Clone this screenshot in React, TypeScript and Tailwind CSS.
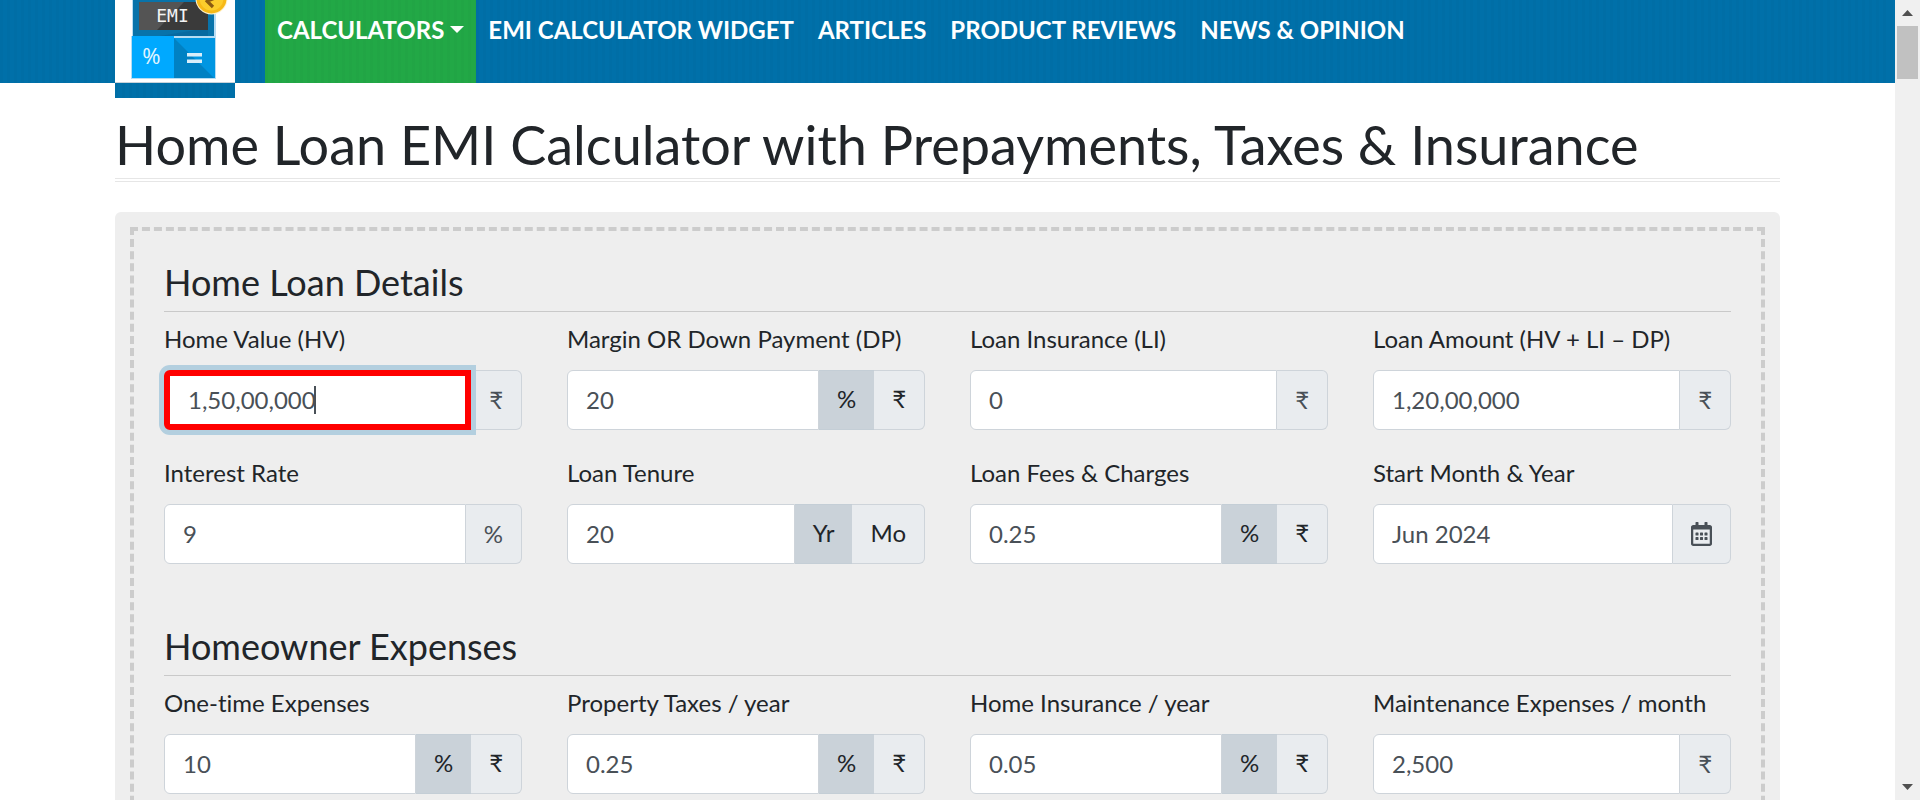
import { useId } from "react";
import { FaRegCalendarAlt } from "react-icons/fa";

type Unit = { text: string; active?: boolean };

type FieldData = {
  label: string;
  value: string;
  unit?: string;
  toggle?: Unit[];
  calendar?: boolean;
  focused?: boolean;
};

const percentOrRupee: Unit[] = [{ text: "%", active: true }, { text: "₹" }];

const loanFields: FieldData[] = [
  { label: "Home Value (HV)", value: "1,50,00,000", unit: "₹", focused: true },
  { label: "Margin OR Down Payment (DP)", value: "20", toggle: percentOrRupee },
  { label: "Loan Insurance (LI)", value: "0", unit: "₹" },
  { label: "Loan Amount (HV + LI – DP)", value: "1,20,00,000", unit: "₹" },
  { label: "Interest Rate", value: "9", unit: "%" },
  { label: "Loan Tenure", value: "20", toggle: [{ text: "Yr", active: true }, { text: "Mo" }] },
  { label: "Loan Fees & Charges", value: "0.25", toggle: percentOrRupee },
  { label: "Start Month & Year", value: "Jun 2024", calendar: true },
];

const expenseFields: FieldData[] = [
  { label: "One-time Expenses", value: "10", toggle: percentOrRupee },
  { label: "Property Taxes / year", value: "0.25", toggle: percentOrRupee },
  { label: "Home Insurance / year", value: "0.05", toggle: percentOrRupee },
  { label: "Maintenance Expenses / month", value: "2,500", unit: "₹" },
];

const navLinks = ["EMI CALCULATOR WIDGET", "ARTICLES", "PRODUCT REVIEWS", "NEWS & OPINION"];

const stripes =
  "bg-[repeating-linear-gradient(90deg,rgba(0,0,0,0.02)_0px,rgba(0,0,0,0.02)_3px,transparent_3px,transparent_7px)]";

function Logo() {
  return (
    <svg viewBox="0 0 120 83" className="block h-[83px] w-[120px]" role="img" aria-label="EMI Calculator">
      <rect width="120" height="83" fill="#fff" />
      <rect y="82" width="120" height="1" fill="#c9d3da" />
      <rect x="17" y="-4" width="84" height="42" fill="#b9dcf2" />
      <rect x="18" y="-4" width="81" height="42" fill="#0873aa" />
      <path d="M81 30 93 14V36H45Z" fill="#0769a0" />
      <rect x="24" y="2" width="69" height="28" fill="#545454" />
      <path d="M69 2H93V30H42Z" fill="#3a3a3a" />
      <text x="57.500" y="22" textAnchor="middle" fontSize="18" fontFamily="DejaVu Sans Mono, monospace" fill="#f3f3f3">
        EMI
      </text>
      <rect x="16" y="36" width="85" height="43" fill="#b5dcf3" />
      <rect x="17" y="36" width="42" height="42" fill="#00a9ff" />
      <rect x="59" y="38" width="41" height="40" fill="#0096e2" />
      <path d="M59 38 99 78H59Z" fill="#0081c3" />
      <text x="36.500" y="64" textAnchor="middle" fontSize="22" fontFamily="Noto Sans, sans-serif" fill="#dff3ff">
        %
      </text>
      <path d="M72 53H87V56.500H72ZM72 59.500H87V63H72Z" fill="#d9eefa" />
      <circle cx="96.500" cy="-1.500" r="16" fill="#fff3cf" />
      <circle cx="96.500" cy="-1.500" r="15" fill="#f7b916" />
      <circle cx="96.500" cy="-1.500" r="12" fill="#fccd2c" />
      <path d="M91 0.500C95 0.500 98 0 100 -3M91 0 98 7" fill="none" stroke="#8a5a12" strokeWidth="3.200" />
    </svg>
  );
}

function Header() {
  return (
    <header className={`h-[83px] bg-[#0070a9] px-[115px] ${stripes}`}>
      <div className="flex items-start">
        <a href="#home" className={`mr-[30px] block h-[98px] w-[120px] shrink-0 bg-[#0070a9] ${stripes}`}>
          <Logo />
        </a>
        <nav className="flex whitespace-nowrap text-2xl font-bold text-white">
          <button type="button" className={`flex h-[83px] items-start bg-[#22a846] px-3 pt-3 ${stripes}`}>
            <span className="leading-9">CALCULATORS</span>
            <svg viewBox="0 0 14 7" className="mt-[14px] ml-1.5 h-[7px] w-[14px]" aria-hidden="true">
              <path d="M0 0H14L7 7Z" fill="currentColor" />
            </svg>
          </button>
          {navLinks.map((text) => (
            <a key={text} href="#nav" className="px-3 pt-3 leading-9">
              {text}
            </a>
          ))}
        </nav>
      </div>
    </header>
  );
}

function Field({ label, value, unit, toggle, calendar, focused }: FieldData) {
  const id = useId();
  return (
    <div>
      <label htmlFor={id} className="mb-3.5 block whitespace-nowrap leading-[34px]">
        {label}
      </label>
      <div className="flex h-[60px]">
        <div className="relative flex min-w-0 flex-1">
          <input
            id={id}
            type="text"
            defaultValue={value}
            className={
              focused
                ? "z-10 w-full min-w-0 rounded-l-md border-[6px] border-[#ff0000] bg-white px-[18px] text-[#495057] shadow-[0_0_0_5px_#b3cfdf] outline-none"
                : "w-full min-w-0 rounded-l-md border border-[#ced4da] bg-white px-[18px] text-[#495057] outline-none"
            }
          />
          {focused && <span className="absolute top-4 left-[150px] z-20 h-7 w-0.5 bg-[#495057]" aria-hidden="true" />}
        </div>
        {unit && (
          <span className="flex items-center rounded-r-md border border-l-0 border-[#ced4da] bg-[#e9ecef] px-[18px] text-[#495057]">
            {unit}
          </span>
        )}
        {calendar && (
          <button
            type="button"
            aria-label="Choose month"
            className="flex items-center rounded-r-md border border-l-0 border-[#ced4da] bg-[#e9ecef] px-[18px] text-[#495057]"
          >
            <FaRegCalendarAlt className="h-6 w-[21px]" />
          </button>
        )}
        {toggle?.map(({ text, active }) => (
          <button
            key={text}
            type="button"
            aria-pressed={!!active}
            className={
              active
                ? "border-y border-[#c4ced6] bg-[#cad2d9] px-[18px] pb-0.5 text-[#212529]"
                : "rounded-r-md border border-l-0 border-[#ced4da] bg-[#e9ecef] px-[18px] pb-0.5 text-[#212529]"
            }
          >
            {text}
          </button>
        ))}
      </div>
    </div>
  );
}

function Section({ title, fields }: { title: string; fields: FieldData[] }) {
  return (
    <section>
      <h2 className="mb-2.5 border-b border-[#c9c9c9] pb-[7px] text-4xl leading-[43px]">{title}</h2>
      <div className="grid grid-cols-4 gap-x-[45px] gap-y-[26px]">
        {fields.map((field) => (
          <Field key={field.label} {...field} />
        ))}
      </div>
    </section>
  );
}

function ScrollBar() {
  return (
    <div className="flex w-[25px] shrink-0 flex-col items-center bg-[#f0f0f0]" aria-hidden="true">
      <svg viewBox="0 0 25 26" className="h-[26px] w-[25px]">
        <path d="M7 16 12.500 10 18 16Z" fill="#505050" />
      </svg>
      <div className="h-[53px] w-[21px] bg-[#c1c1c1]" />
      <svg viewBox="0 0 25 26" className="mt-auto h-[26px] w-[25px]">
        <path d="M7 10 12.500 16 18 10Z" fill="#505050" />
      </svg>
    </div>
  );
}

export default function App() {
  return (
    <div className="flex h-screen overflow-hidden bg-white font-['Lato',sans-serif] text-2xl text-[#212529] [font-variant-ligatures:no-common-ligatures]">
      <div className="min-w-0 flex-1 overflow-hidden">
        <Header />
        <main className="px-[115px] pt-[30px]">
          <h1 className="mb-[30px] border-b-4 border-double border-[#e6e6e6] pb-0.5 text-[54px] leading-[63px]">
            Home Loan EMI Calculator with Prepayments, Taxes &amp; Insurance
          </h1>
          <form className="rounded-md bg-[#eeeeee] p-[15px]">
            <div className="flex flex-col gap-[61px] border-4 border-dashed border-[#cccccc] p-[30px]">
              <Section title="Home Loan Details" fields={loanFields} />
              <Section title="Homeowner Expenses" fields={expenseFields} />
            </div>
          </form>
        </main>
      </div>
      <ScrollBar />
    </div>
  );
}
